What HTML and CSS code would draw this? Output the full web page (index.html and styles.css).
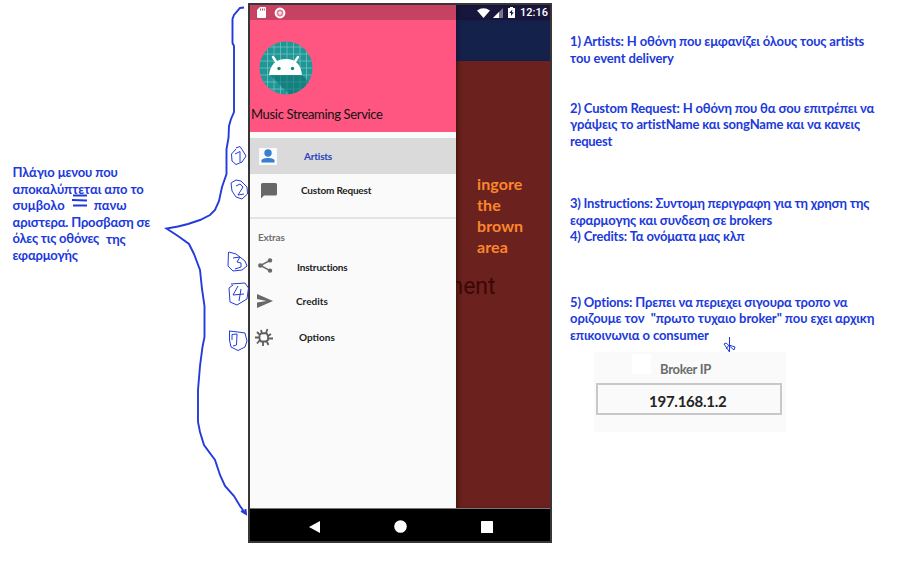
FILE: index.html
```html
<!DOCTYPE html>
<html lang="el">
<head>
<meta charset="utf-8">
<title>Music Streaming Service</title>
<link rel="stylesheet" href="styles.css">
</head>
<body>
<main class="board">
  <aside class="menu-note note">
    <p><span class="l1">Πλάγιο μενου που</span></p>
    <p><span class="l2">αποκαλύπτεται απο το</span></p>
    <p class="split"><span class="l3">συμβολο</span>
      <svg class="burger" width="18" height="13" viewBox="0 0 18 13"><path d="M2 1.5H16M1 6L16 6.500M2 11.500H16"/></svg>
      <span class="l3">πανω</span></p>
    <p><span class="l4">αριστερα. Προσβαση σε</span></p>
    <p class="split"><span class="l5">όλες τις οθόνες</span><span class="low">της</span></p>
    <p><span class="l6">εφαρμογής</span></p>
  </aside>

  <section class="phone">
    <div class="screen">
      <div class="drawer">
        <div class="status left">
          <svg width="9" height="11" viewBox="0 0 9 11"><path fill="#fff" d="M3 0H8Q9 0 9 1V10Q9 11 8 11H1Q0 11 0 10V3Z"/><path stroke="#c54263" d="M3.500 1.500V3.500M5.500 1.500V3.500M7.300 1.500V3.500"/></svg>
          <svg width="12" height="12" viewBox="0 0 12 12"><circle cx="6" cy="6" r="4.400" fill="#dc8199" stroke="#fff" stroke-width="2"/><circle cx="6" cy="6" r="1.800" fill="#f8dce3"/></svg>
        </div>
        <header class="brand">
          <svg width="54" height="54" viewBox="0 0 54 54">
            <defs><clipPath id="disc"><circle cx="27" cy="27" r="26.500"/></clipPath></defs>
            <g clip-path="url(#disc)">
              <rect width="54" height="54" fill="#1f9797"/>
              <path stroke="#7fc4c2" stroke-width=".7" d="M8.500 0V54M15 0V54M21.500 0V54M28 0V54M34.500 0V54M41 0V54M47.500 0V54M0 6H54M0 13H54M0 20H54M0 27H54M0 34H54M0 41H54M0 48H54"/>
              <path d="M11 34L31 54H50V41L43 34Z" fill="#08716f" opacity=".6"/>
            </g>
            <path fill="#fff" d="M10 34C11 24 17 18 27 18S42 24 43 34Z"/>
            <path stroke="#fff" stroke-width="2.400" stroke-linecap="round" d="M14 16L18 22M39 16L35 22"/>
            <circle cx="20" cy="27.500" r="1.700" fill="#158582"/><circle cx="33.500" cy="27.500" r="1.700" fill="#158582"/>
          </svg>
          <h1><span class="title">Music Streaming Service</span></h1>
        </header>
        <nav>
          <a class="item active"><span class="tile"><svg width="18" height="17" viewBox="0 0 18 17"><circle cx="9" cy="5" r="3.700"/><path d="M2.500 14.500V12.500C2.500 9 15.500 9 15.500 12.500V14.500Z"/></svg></span><span class="m1">Artists</span></a>
          <a class="item custom"><svg width="16" height="16" viewBox="0 0 16 16"><path d="M1.500 0H14.500Q16 0 16 1.500V11Q16 12.500 14.500 12.500H3L0 15.500V1.500Q0 0 1.500 0Z"/></svg><span class="m2">Custom Request</span></a>
          <h2><span class="m3">Extras</span></h2>
          <a class="item share"><svg width="15" height="15" viewBox="0 0 15 15"><path fill="none" stroke="#686868" stroke-width="1.500" d="M12 2.300L2.500 7.500L12 12.700"/><circle cx="12" cy="2.400" r="2.200"/><circle cx="2.400" cy="7.500" r="2.300"/><circle cx="12" cy="12.600" r="2.200"/></svg><span class="m4">Instructions</span></a>
          <a class="item credits"><svg width="16" height="14" viewBox="0 0 16 14"><path d="M0 0L16 7L0 14V8.500L9.500 7L0 5Z"/></svg><span class="m5">Credits</span></a>
          <a class="item options"><svg width="18" height="19" viewBox="0 0 18 19"><path fill="none" stroke="#5e5e5e" stroke-width="1.800" d="M6 5.500L11.500 5L13 8V12L10.500 13.500H6L4.500 11V7ZM7 5.500L6 2M11 5L12.500 1M13 8L16 6M13 10.500H18M11.500 13L13.500 17M8 13.500V18M5 12L2 15.500M4.500 9.500H0M5 7L2 4"/></svg><span class="m6">Options</span></a>
        </nav>
      </div>
      <div class="backdrop">
        <div class="status right">
          <svg width="13" height="10" viewBox="0 0 13 10"><path fill="#fff" d="M0 2.500Q6.500 -2 13 2.500L6.500 10Z"/></svg>
          <svg width="10" height="10" viewBox="0 0 10 10"><path fill="#77758d" d="M0 10L10 0V10Z"/><path fill="#fff" d="M0 10L6 4V10Z"/></svg>
          <svg class="battery" width="7" height="11" viewBox="0 0 7 11"><path fill="#fff" d="M2 0H5V1H7V11H0V1H2Z"/><path fill="#18163d" d="M4.300 2.500L1.300 6H3V9L5.700 5.300H4Z"/></svg>
          <time>12:16</time>
        </div>
        <div class="appbar"></div>
        <div class="brown">
          <p class="warning">ingore<br>the<br>brown<br>area</p>
          <p class="fragment"><span>ment</span></p>
        </div>
      </div>
    </div>
    <footer class="keys">
      <svg width="11" height="12" viewBox="0 0 11 12"><path d="M0 6L11 0V12Z"/></svg>
      <svg width="13" height="13" viewBox="0 0 13 13"><circle cx="6.500" cy="6.500" r="6.300"/></svg>
      <svg width="12" height="12" viewBox="0 0 12 12"><rect width="12" height="12" rx=".5"/></svg>
    </footer>
  </section>

  <section class="details note">
    <div class="n1"><p><span class="r1">1) Artists: Η οθόνη που εμφανίζει όλους τους artists</span></p><p><span class="r2">του event delivery</span></p></div>
    <div class="n2"><p><span class="r3">2) Custom Request: Η οθόνη που θα σου επιτρέπει να</span></p><p><span class="r4">γράψεις το artistName και songName και να κανεις</span></p><p><span class="r5">request</span></p></div>
    <div class="n3"><p><span class="r6">3) Instructions: Συντομη περιγραφη για τη χρηση της</span></p><p><span class="r7">εφαρμογης και συνδεση σε brokers</span></p><p><span class="r8">4) Credits: Τα ονόματα μας κλπ</span></p></div>
    <div class="n5"><p><span class="r9">5) Options: Πρεπει να περιεχει σιγουρα τροπο να</span></p><p><span class="r10">οριζουμε τον&nbsp; "πρωτο τυχαιο broker" που εχει αρχικη</span></p><p><span class="r11">επικοινωνια ο consumer</span></p></div>
    <div class="broker"><div class="erased"></div><label><span>Broker IP</span></label><div class="field"><span>197.168.1.2</span></div></div>
  </section>

  <svg class="ink" width="906" height="567" viewBox="0 0 906 567">
    <path class="brace" d="M244 7.500L240 8L234 15L232.500 19V43L234 46V112L231 119L229 126L228.500 138L226.500 149V174L222 187L219 201L215 210L210 215L200 220L188 224L178 226.500L166.500 228.500L178 236L189 244L194 254L200 270L202 289L204.500 306V337L202.500 347L200 366L198 390V422L200 432L204 445L215 460L220 475L225 486L234 496L240 506L245.500 513.500M241 511L246 514L245.500 509"/>
    <g class="digits">
      <path d="M236 148L240 146.500L243 151L246 156L242 162L236 164.500L232 161L231.500 154L236 149M235 154L240 151.500V162"/>
      <path d="M236 180L241 181L247 187L247.500 194L242 199L236 197L232 191L231 183L236 180M236 186L240 184L243 187L238 195L244 194"/>
      <path d="M229 252L236 254L245 261L247 266L242 270L233 271L228 266L228.500 252M233 258L240 257L237 262L241 263L241 267L235 269"/>
      <path d="M231 284L245 283L248.500 288L247 299L237 305L230 302L229 288L233 285M238 286L233 295L244 294M241 289L239 301"/>
      <path d="M229 331L234 331.500L245 333L247 341L245 347L238 350.500L231 347L229.500 340V331M232 340V334.500L237 334L236.500 345L233 346"/>
      <path d="M729.500 337V352L724 344L726 343L734 350L735 347L729 345L726 349"/>
    </g>
  </svg>
</main>
</body>
</html>
```
FILE: styles.css
```css
* { box-sizing: border-box; }
body { margin: 0; background: #fff; font-family: Lato, "Open Sans", sans-serif; }
p, h1, h2 { margin: 0; }
svg { flex: none; display: block; }
.board { position: relative; width: 906px; height: 567px; display: grid; grid-template-columns: 248px 304px 354px; overflow: hidden; }
.ink { position: absolute; inset: 0; fill: none; stroke: #243bdc; pointer-events: none; }
.brace { stroke-width: 1.900; }
.digits { stroke-width: 1; }

.note { color: #2039db; font-size: 13px; font-weight: 700; line-height: 16.600px; }
.note p { white-space: nowrap; height: 16.600px; }
.menu-note { padding: 164px 0 0 12.500px; }
.split { display: flex; }
.burger { margin: -3px 5px 0 6px; stroke: #2039db; stroke-width: 1.900; }
.low { margin: 1px 0 0 7px; letter-spacing: -.2px; }
.l1 { letter-spacing: -.12px; }
.l2 { letter-spacing: -.09px; }
.l4 { letter-spacing: -.18px; }
.l5, .l6 { letter-spacing: -.22px; }
.details { padding: 33px 0 0 18px; }
.n2 { margin-top: 33.500px; }
.n3 { margin-top: 45.500px; }
.n5 { margin-top: 49px; }
.r1, .r4, .r9 { letter-spacing: -.15px; }
.r2, .r11 { letter-spacing: -.1px; }
.r3 { letter-spacing: -.16px; }
.r5, .r6 { letter-spacing: -.235px; }
.r7 { letter-spacing: -.13px; }
.r8 { letter-spacing: -.2px; }
.r10 { letter-spacing: -.06px; }

.phone { margin-top: 3px; height: 540px; border: 2px solid #373737; display: flex; flex-direction: column; background: #000; }
.screen { height: 504px; display: grid; grid-template-columns: 206px 94px; border-bottom: 1px solid #777; }
.drawer { background: #fafafa; }
.status { height: 15px; display: flex; align-items: center; }
.status.left { background: #c54263; padding-left: 7px; gap: 8px; }
.brand { height: 112px; background: #ff5581; padding: 21px 0 0 9px; }
.brand h1 { font-size: 13px; line-height: 16px; font-weight: 400; margin: 11px 0 0 -8px; color: #111; white-space: nowrap; letter-spacing: -.33px; }
nav { padding-top: 6px; }
.item { display: flex; align-items: center; font-size: 10px; font-weight: 700; color: #222; fill: #686868; height: 36px; white-space: nowrap; }
.item.active { background: #dadada; color: #2942bd; fill: #397fd1; padding-left: 9px; gap: 27px; letter-spacing: -.3px; }
.m1 { letter-spacing: -.2px; }
.tile { background: #fafafa; }
.custom { padding-left: 11px; gap: 24px; height: 34px; letter-spacing: -.2px; }
.m2 { margin-top: -2px; }
h2 { height: 40px; margin-top: 9px; border-top: 2px solid #e4e4e4; padding: 11px 0 0 8px; font-size: 10px; line-height: 14px; color: #707070; letter-spacing: -.2px; }
.share { padding-left: 8px; gap: 24px; height: 20px; letter-spacing: -.2px; }
.share svg { margin-top: -3px; }
.credits { margin-top: 6px; padding-left: 7px; gap: 23px; }
.options { padding-left: 5px; gap: 26px; }

.backdrop { background: #6b221e; box-shadow: inset 4px 0 4px -2px #441210; }
.status.right { background: #18163d; padding-left: 21px; gap: 3px; box-shadow: inset 4px 0 4px -2px #101028; }
.battery { margin: 0 2px; }
time { color: #fff; font: 500 11px/15px Roboto, sans-serif; margin-top: -1px; }
.appbar { height: 41px; background: #14214b; box-shadow: inset 4px 0 4px -2px #18133a; }
.warning { margin: 112px 0 0 21px; color: #fb862c; font-size: 16px; line-height: 21px; font-weight: 700; letter-spacing: .1px; }
.fragment { height: 30px; margin-top: 15px; overflow: hidden; color: #3d0705; font: 23px/30px Roboto, sans-serif; display: flex; }
.fragment span { margin-left: -13px; }
.keys { height: 32px; display: flex; align-items: center; padding: 3px 0 0 59px; gap: 74px; fill: #fff; }

.broker { width: 192px; height: 80px; margin: 8.500px 0 0 24px; padding: 0 4px 0 2px; background: #fafafa; display: grid; grid-template-rows: 31px 32px; position: relative; }
.broker label { padding: 9px 0 0 64px; color: #6c6c6c; font-size: 13px; letter-spacing: -.3px; }
.field { border: 2px solid #c8c8c8; color: #242424; font-size: 15px; line-height: 33px; padding-left: 51px; letter-spacing: -.25px; }
.erased { position: absolute; left: 38px; top: 2px; width: 19px; height: 20px; background: #fff; }
```
